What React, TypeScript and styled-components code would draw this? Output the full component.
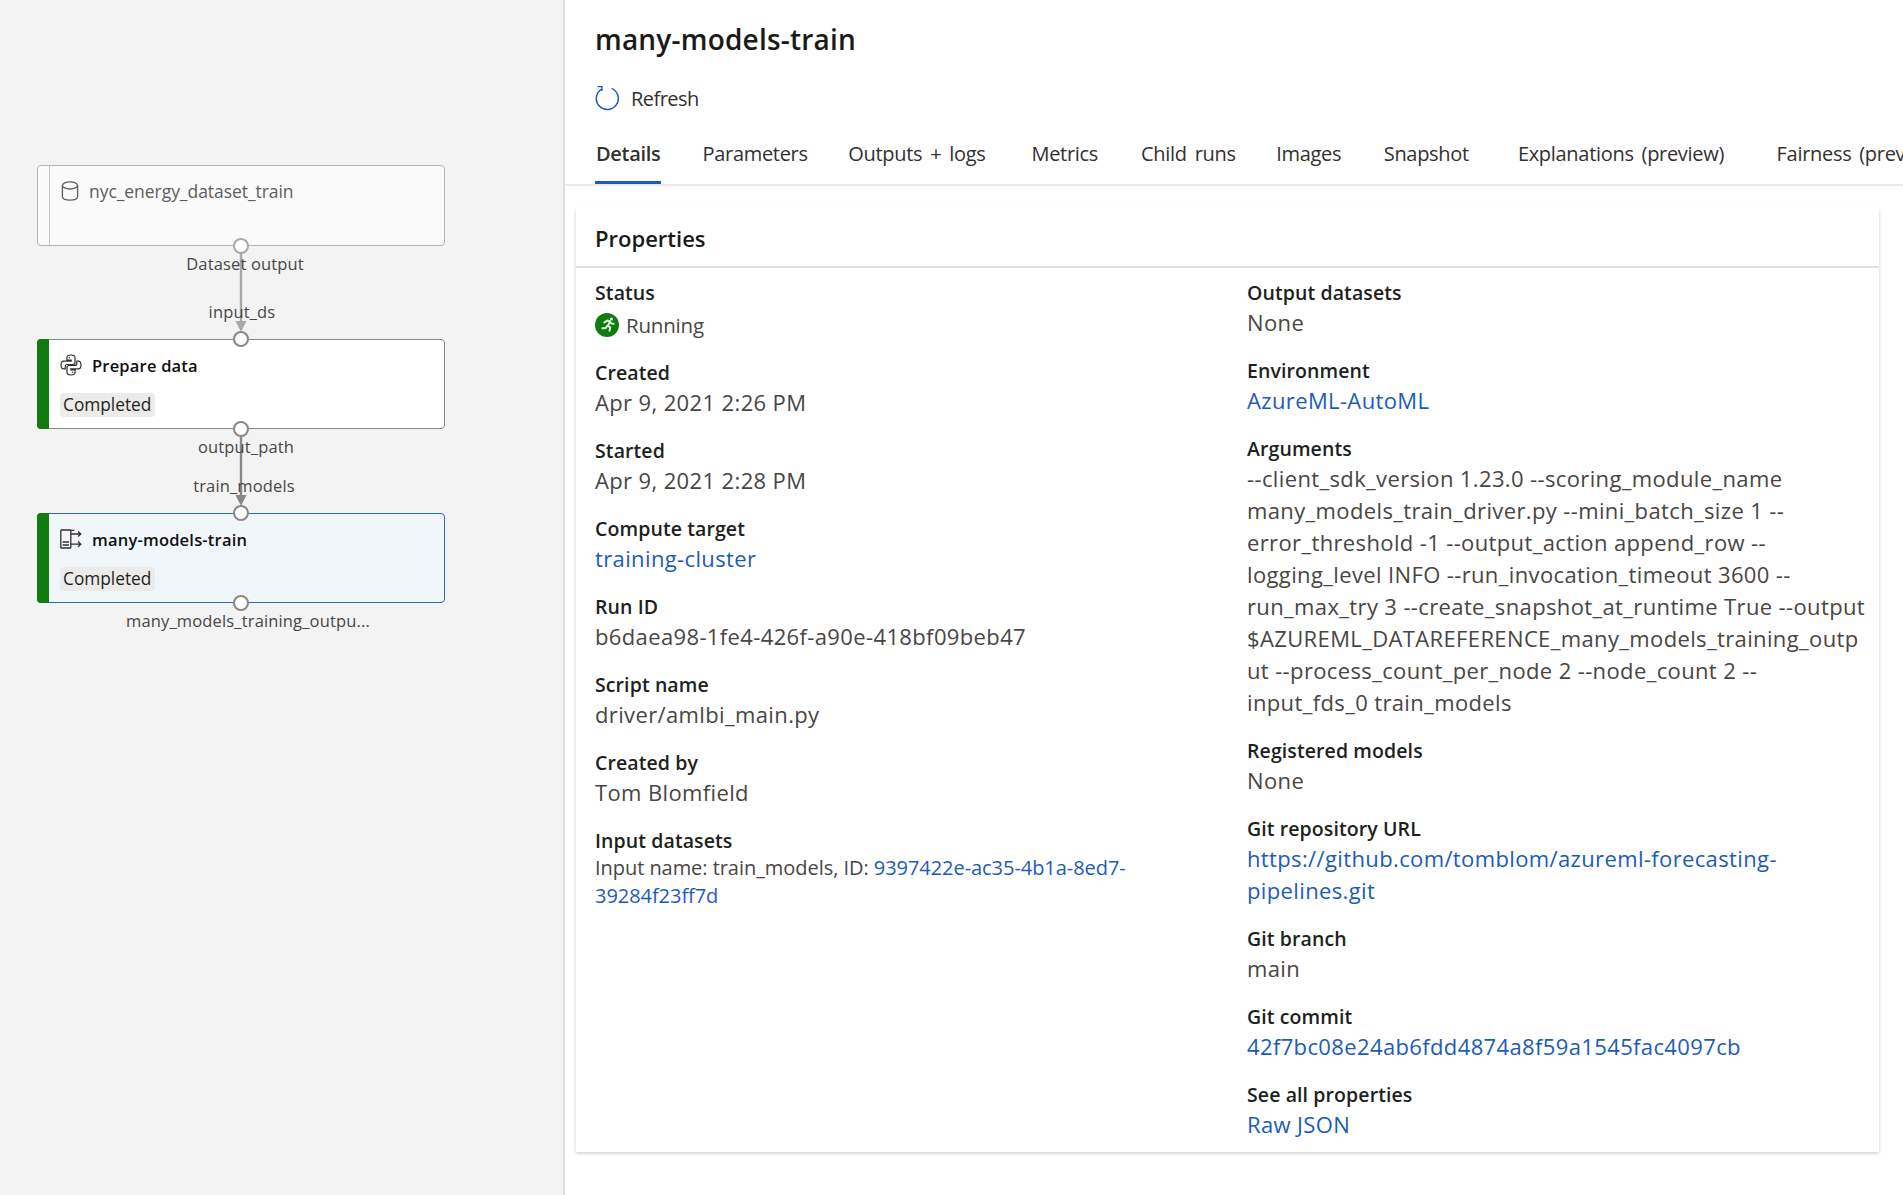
import React from 'react';
import styled, { createGlobalStyle } from 'styled-components';

const GlobalStyle = createGlobalStyle`
  html, body {
    margin: 0;
    padding: 0;
    height: 100%;
    background: #fff;
    overflow: hidden;
  }
  body {
    font-family: "Open Sans", "Noto Sans", "Liberation Sans", sans-serif;
    color: #323130;
  }
`;

const Page = styled.div`
  display: flex;
  width: 1903px;
  height: 1195px;
  overflow: hidden;
`;

const GraphPane = styled.div`
  position: relative;
  flex: none;
  width: 563px;
  height: 100%;
  background: #f3f3f3;
  border-right: 2px solid #e1dfdd;
`;

const DetailPane = styled.main`
  flex: 1;
  min-width: 0;
  padding-top: 20px;
  overflow: hidden;
`;

const Node = styled.div<{ $top: number; $height: number; $tone: 'dataset' | 'module' | 'selected' }>`
  position: absolute;
  left: 37px;
  top: ${(p) => p.$top}px;
  box-sizing: border-box;
  width: 408px;
  height: ${(p) => p.$height}px;
  display: flex;
  border-radius: 4px;
  border: 1px solid
    ${(p) => (p.$tone === 'selected' ? '#2b66bd' : p.$tone === 'dataset' ? '#b4b4b4' : '#8a8886')};
  background: ${(p) => (p.$tone === 'selected' ? '#f1f6fb' : p.$tone === 'dataset' ? '#fafafa' : '#fff')};
`;

const NodeStrip = styled.div<{ $done?: boolean }>`
  flex: none;
  box-sizing: border-box;
  width: 12px;
  margin: ${(p) => (p.$done ? '-1px 0 -1px -1px' : '0')};
  border-radius: ${(p) => (p.$done ? '4px 0 0 4px' : '0')};
  background: ${(p) => (p.$done ? '#107c10' : 'transparent')};
  border-right: ${(p) => (p.$done ? 'none' : '1px solid #c4c4c4')};
`;

const NodeBody = styled.div`
  flex: 1;
  padding: 13px 0 0 11px;
`;

const NodeHead = styled.div`
  display: flex;
  align-items: center;
  gap: 10px;
  height: 24px;
`;

const NodeTitle = styled.span<{ $muted?: boolean }>`
  font-size: ${(p) => (p.$muted ? '17.5px' : '16.5px')};
  font-weight: ${(p) => (p.$muted ? 400 : 600)};
  letter-spacing: ${(p) => (p.$muted ? '-0.05px' : '0.2px')};
  color: ${(p) => (p.$muted ? '#605e5c' : '#11100f')};
  white-space: nowrap;
`;

const StatusPill = styled.span`
  display: inline-block;
  margin-top: 16px;
  padding: 0 4px 0 3px;
  height: 24px;
  line-height: 23px;
  border-radius: 4px;
  background: #edebe9;
  font-size: 17.3px;
  color: #201f1e;
`;

const Port = styled.div<{ $y: number; $tone?: 'soft' }>`
  position: absolute;
  left: 233px;
  top: ${(p) => p.$y - 8}px;
  box-sizing: border-box;
  width: 16px;
  height: 16px;
  border-radius: 50%;
  background: #fff;
  border: 2px solid ${(p) => (p.$tone === 'soft' ? '#a8a8a8' : '#8a8886')};
`;

const PortLabel = styled.div<{ $x: number; $y: number }>`
  position: absolute;
  left: ${(p) => p.$x}px;
  top: ${(p) => p.$y - 12}px;
  height: 24px;
  line-height: 24px;
  transform: translateX(-50%);
  font-size: 16.5px;
  letter-spacing: 0.15px;
  color: #484644;
  white-space: nowrap;
`;

const Wire = styled.svg<{ $top: number; $height: number }>`
  position: absolute;
  left: 234px;
  top: ${(p) => p.$top}px;
  width: 14px;
  height: ${(p) => p.$height}px;
`;

const Title = styled.h1`
  margin: 0 0 0 30px;
  font-size: 28px;
  line-height: 38px;
  font-weight: 600;
  letter-spacing: 0.2px;
  color: #1b1a19;
`;

const Toolbar = styled.div`
  display: flex;
  align-items: center;
  gap: 12px;
  margin: 21px 0 0 30px;
  height: 38px;
`;

const ToolLabel = styled.span`
  font-size: 20px;
  letter-spacing: -0.55px;
  color: #323130;
`;

const Tabs = styled.nav`
  display: flex;
  height: 58px;
  margin-top: 9px;
  padding-left: 30px;
  border-bottom: 2px solid #edebe9;
  white-space: nowrap;
  overflow: hidden;
`;

const Tab = styled.div<{ $active?: boolean; $gap: number }>`
  flex: none;
  box-sizing: border-box;
  height: 58px;
  margin-right: ${(p) => p.$gap}px;
  padding: 0 1px;
  line-height: 56px;
  font-size: 20px;
  letter-spacing: -0.3px;
  word-spacing: 3px;
  font-weight: ${(p) => (p.$active ? 600 : 400)};
  color: #323130;
  border-bottom: 3px solid ${(p) => (p.$active ? '#1c5cb8' : 'transparent')};
`;

const Card = styled.section`
  box-sizing: border-box;
  width: 1303px;
  height: 944px;
  margin: 22px 0 0 11px;
  background: #fff;
  box-shadow: 0 1.6px 3.6px rgba(0, 0, 0, 0.2), 0 0.3px 0.9px rgba(0, 0, 0, 0.12);
`;

const CardHeader = styled.h2`
  box-sizing: border-box;
  height: 60px;
  margin: 0;
  padding: 0 0 0 19px;
  line-height: 60px;
  border-bottom: 2px solid #e1dfdd;
  font-size: 22px;
  font-weight: 600;
  color: #1b1a19;
`;

const Columns = styled.div`
  display: grid;
  grid-template-columns: 652px 624px;
  padding: 11px 0 0 19px;
`;

const Field = styled.div`
  margin-bottom: 19px;
`;

const Label = styled.div`
  height: 27px;
  line-height: 27px;
  font-size: 19.5px;
  font-weight: 600;
  letter-spacing: 0.1px;
  color: #201f1e;
`;

const Value = styled.div<{ $small?: boolean }>`
  font-size: ${(p) => (p.$small ? '20px' : '22px')};
  line-height: ${(p) => (p.$small ? '28px' : '32px')};
  letter-spacing: ${(p) => (p.$small ? '-0.05px' : '0.37px')};
  color: #484644;
`;

const Link = styled.a`
  color: #1c5cb8;
  text-decoration: none;
`;

const Narrow = styled.div`
  width: 560px;
`;

const StatusRow = styled.div`
  display: flex;
  align-items: center;
  gap: 7px;
  height: 36px;
  margin: 1px 0 -3px;
  font-size: 20.5px;
  letter-spacing: -0.2px;
  color: #484644;
`;

const DatasetIcon = () => (
  <svg width="18" height="20" viewBox="0 0 18 20" fill="none" stroke="#605e5c" strokeWidth="1.3">
    <ellipse cx="9" cy="4.4" rx="7.6" ry="3.6" />
    <path d="M1.4 4.4v11.2C1.4 17.8 4.8 19.2 9 19.2s7.6-1.4 7.6-3.6V4.4" />
  </svg>
);

const PythonIcon = () => (
  <svg width="22" height="22" viewBox="0 0 22 22" fill="none" stroke="#323130" strokeWidth="1.2">
    <path d="M11 10.5H7.2c-1.1 0-2 .9-2 2v2.4H3.6C2 14.9 1 13.4 1 11s1-3.9 2.6-3.9h7.6v-1H6.9V3.4C6.9 2 8.6 1 11 1s4 1 4 2.4v5.1c0 1.1-.9 2-2 2z" />
    <path d="M11 11.5h3.8c1.1 0 2-.9 2-2V7.1h1.6c1.6 0 2.6 1.5 2.6 3.9s-1 3.9-2.6 3.9h-7.6v1h4.3v2.7C15.1 20 13.4 21 11 21s-4-1-4-2.4v-5.1c0-1.1.9-2 2-2z" />
    <circle cx="9.3" cy="3.8" r=".7" fill="#323130" stroke="none" />
    <circle cx="12.7" cy="18.2" r=".7" fill="#323130" stroke="none" />
  </svg>
);

const ModuleIcon = () => (
  <svg width="22" height="20" viewBox="0 0 22 20" fill="none" stroke="#323130" strokeWidth="1.3">
    <rect x=".8" y="1" width="10" height="18" rx=".6" />
    <path d="M2.6 13h6.4M2.6 16h6.4" strokeWidth="1.7" />
    <path d="M10.8 1.4h3.6M10.8 5h10M18 2.4 20.8 5 18 7.6M10.8 15.2h10M18 12.6l2.8 2.6-2.8 2.6" />
  </svg>
);

const RefreshIcon = () => (
  <svg width="24" height="26" viewBox="0 0 24 26" fill="none" stroke="#1c5cb8" strokeWidth="1.5">
    <path d="M6.2 4.4A11 11 0 1 0 16.5 3.4" />
    <path d="M2.6 1.6h4.3v4.4" strokeWidth="1.4" />
  </svg>
);

const RunningIcon = () => (
  <svg width="24" height="24" viewBox="0 0 24 24">
    <circle cx="12" cy="12" r="12" fill="#107c10" />
    <g fill="none" stroke="#dff3df" strokeWidth="1.9" strokeLinecap="round" strokeLinejoin="round">
      <path d="M9.2 9.6l3.2-2.1 2.6.9-2 4.3 2.3 1.8-.8 3.3" />
      <path d="M12.3 12.8l-1.5 2.2-3.4.3M15 8.6l1.2 2 2.4.2" />
    </g>
    <circle cx="16.4" cy="5.9" r="1.5" fill="#dff3df" />
  </svg>
);

const ArrowWire = ({ top, height, color }: { top: number; height: number; color: string }) => (
  <Wire $top={top} $height={height} viewBox={`0 0 14 ${height}`}>
    <line x1="7" y1="0" x2="7" y2={height - 8} stroke={color} strokeWidth="2.4" />
    <path d={`M1.5 ${height - 11}h11L7 ${height}z`} fill={color} />
  </Wire>
);

const tabs = [
  { label: 'Details', gap: 40, active: true },
  { label: 'Parameters', gap: 38.5 },
  { label: 'Outputs + logs', gap: 44 },
  { label: 'Metrics', gap: 41 },
  { label: 'Child runs', gap: 38.5 },
  { label: 'Images', gap: 40.5 },
  { label: 'Snapshot', gap: 47 },
  { label: 'Explanations (preview)', gap: 50.5 },
  { label: 'Fairness (preview)', gap: 40 },
];

const App: React.FC = () => (
  <Page>
    <GlobalStyle />
    <GraphPane>
      <ArrowWire top={252} height={80} color="#a8a8a8" />
      <ArrowWire top={436} height={70} color="#8a8886" />

      <Node $top={165} $height={81} $tone="dataset">
        <NodeStrip />
        <NodeBody>
          <NodeHead>
            <DatasetIcon />
            <NodeTitle $muted>nyc_energy_dataset_train</NodeTitle>
          </NodeHead>
        </NodeBody>
      </Node>
      <Node $top={339} $height={90} $tone="module">
        <NodeStrip $done />
        <NodeBody>
          <NodeHead>
            <PythonIcon />
            <NodeTitle>Prepare data</NodeTitle>
          </NodeHead>
          <StatusPill>Completed</StatusPill>
        </NodeBody>
      </Node>
      <Node $top={513} $height={90} $tone="selected">
        <NodeStrip $done />
        <NodeBody>
          <NodeHead>
            <ModuleIcon />
            <NodeTitle>many-models-train</NodeTitle>
          </NodeHead>
          <StatusPill>Completed</StatusPill>
        </NodeBody>
      </Node>

      <Port $y={246} $tone="soft" />
      <Port $y={339} />
      <Port $y={429} />
      <Port $y={513} />
      <Port $y={603} />

      <PortLabel $x={245} $y={264}>Dataset output</PortLabel>
      <PortLabel $x={242} $y={312}>input_ds</PortLabel>
      <PortLabel $x={246} $y={447}>output_path</PortLabel>
      <PortLabel $x={244} $y={486}>train_models</PortLabel>
      <PortLabel $x={248} $y={621}>many_models_training_outpu...</PortLabel>
    </GraphPane>

    <DetailPane>
      <Title>many-models-train</Title>
      <Toolbar>
        <RefreshIcon />
        <ToolLabel>Refresh</ToolLabel>
      </Toolbar>
      <Tabs>
        {tabs.map((t) => (
          <Tab key={t.label} $active={t.active} $gap={t.gap}>
            {t.label}
          </Tab>
        ))}
      </Tabs>

      <Card>
        <CardHeader>Properties</CardHeader>
        <Columns>
          <div>
            <Field>
              <Label>Status</Label>
              <StatusRow>
                <RunningIcon />
                Running
              </StatusRow>
            </Field>
            <Field>
              <Label>Created</Label>
              <Value>Apr 9, 2021 2:26 PM</Value>
            </Field>
            <Field>
              <Label>Started</Label>
              <Value>Apr 9, 2021 2:28 PM</Value>
            </Field>
            <Field>
              <Label>Compute target</Label>
              <Value>
                <Link>training-cluster</Link>
              </Value>
            </Field>
            <Field>
              <Label>Run ID</Label>
              <Value>b6daea98-1fe4-426f-a90e-418bf09beb47</Value>
            </Field>
            <Field>
              <Label>Script name</Label>
              <Value>driver/amlbi_main.py</Value>
            </Field>
            <Field>
              <Label>Created by</Label>
              <Value>Tom Blomfield</Value>
            </Field>
            <Field>
              <Label>Input datasets</Label>
              <Value $small>
                <Narrow>
                  Input name: train_models, ID: <Link>9397422e-ac35-4b1a-8ed7-39284f23ff7d</Link>
                </Narrow>
              </Value>
            </Field>
          </div>
          <div>
            <Field>
              <Label>Output datasets</Label>
              <Value>None</Value>
            </Field>
            <Field>
              <Label>Environment</Label>
              <Value>
                <Link>AzureML-AutoML</Link>
              </Value>
            </Field>
            <Field>
              <Label>Arguments</Label>
              <Value>
                --client_sdk_version 1.23.0 --scoring_module_name
                <br />
                many_models_train_driver.py --mini_batch_size 1 --
                <br />
                error_threshold -1 --output_action append_row --
                <br />
                logging_level INFO --run_invocation_timeout 3600 --
                <br />
                run_max_try 3 --create_snapshot_at_runtime True --output
                <br />
                $AZUREML_DATAREFERENCE_many_models_training_outp
                <br />
                ut --process_count_per_node 2 --node_count 2 --
                <br />
                input_fds_0 train_models
              </Value>
            </Field>
            <Field>
              <Label>Registered models</Label>
              <Value>None</Value>
            </Field>
            <Field>
              <Label>Git repository URL</Label>
              <Value>
                <Link>
                  https://github.com/tomblom/azureml-forecasting-
                  <br />
                  pipelines.git
                </Link>
              </Value>
            </Field>
            <Field>
              <Label>Git branch</Label>
              <Value>main</Value>
            </Field>
            <Field>
              <Label>Git commit</Label>
              <Value>
                <Link>42f7bc08e24ab6fdd4874a8f59a1545fac4097cb</Link>
              </Value>
            </Field>
            <Field>
              <Label>See all properties</Label>
              <Value>
                <Link>Raw JSON</Link>
              </Value>
            </Field>
          </div>
        </Columns>
      </Card>
    </DetailPane>
  </Page>
);

export default App;
